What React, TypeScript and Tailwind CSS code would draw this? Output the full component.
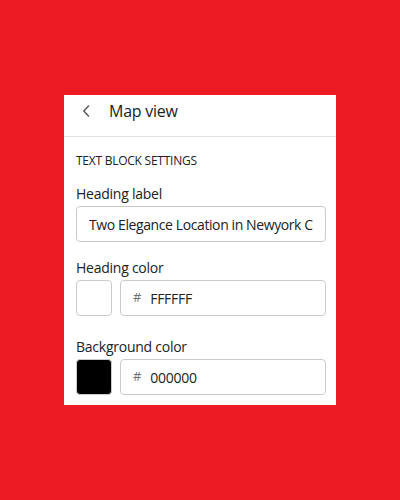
import { useState } from "react";

function ColorRow({ label, color, hex }: { label: string; color: string; hex: string }) {
    return (
        <div>
            <p className="text-[14px] leading-[20px] text-[#202223] mb-[2px]">{label}</p>
            <div className="flex gap-2">
                <div
                    className="w-9 h-9 shrink-0 rounded-[4px] border border-[#c9cccf]"
                    style={{ backgroundColor: color }}
                />
                <div className="flex-1 h-9 flex items-center rounded-[4px] border border-[#c9cccf] pl-3">
                    <span className="text-[13px] text-[#6d7175] mr-[9px]">#</span>
                    <span className="text-[14px] text-[#202223]">{hex}</span>
                </div>
            </div>
        </div>
    );
}

export default function App() {
    const [heading, setHeading] = useState("Two Elegance Location in Newyork City");

    return (
        <div
            className="w-[400px] h-[500px] bg-[#ed1c24] pt-[95px] pl-[64px] tracking-[-0.25px]"
            style={{ fontFamily: '"Open Sans", sans-serif' }}
        >
            <div className="w-[272px] h-[310px] bg-white">
                {/* Header */}
                <div className="h-[42px] flex items-center border-b border-[#e1e3e5] pl-[18px] pb-[9px]">
                    <svg width="8" height="12" viewBox="0 0 8 12" className="mr-[19px]">
                        <path d="M6.5 1 L1.8 6 L6.5 11" fill="none" stroke="#5c5f62" strokeWidth="1.6" strokeLinecap="round" strokeLinejoin="round" />
                    </svg>
                    <h1 className="text-[16px] text-[#202223]">Map view</h1>
                </div>

                <div className="pl-3 pr-[10px] pt-[16px]">
                    <p className="text-[12px] leading-[16px] uppercase text-[#202223] mb-[15px]">Text block settings</p>

                    <div className="mb-4">
                        <p className="text-[14px] leading-[20px] text-[#202223] mb-[2px]">Heading label</p>
                        <input
                            value={heading}
                            onChange={(e) => setHeading(e.target.value)}
                            className="w-full h-9 rounded-[4px] border border-[#c9cccf] px-3 text-[14px] tracking-[-0.4px] text-[#202223] outline-none"
                        />
                    </div>

                    <div className="mb-[21px]">
                        <ColorRow label="Heading color" color="#ffffff" hex="FFFFFF" />
                    </div>
                    <ColorRow label="Background color" color="#000000" hex="000000" />
                </div>
            </div>
        </div>
    );
}
